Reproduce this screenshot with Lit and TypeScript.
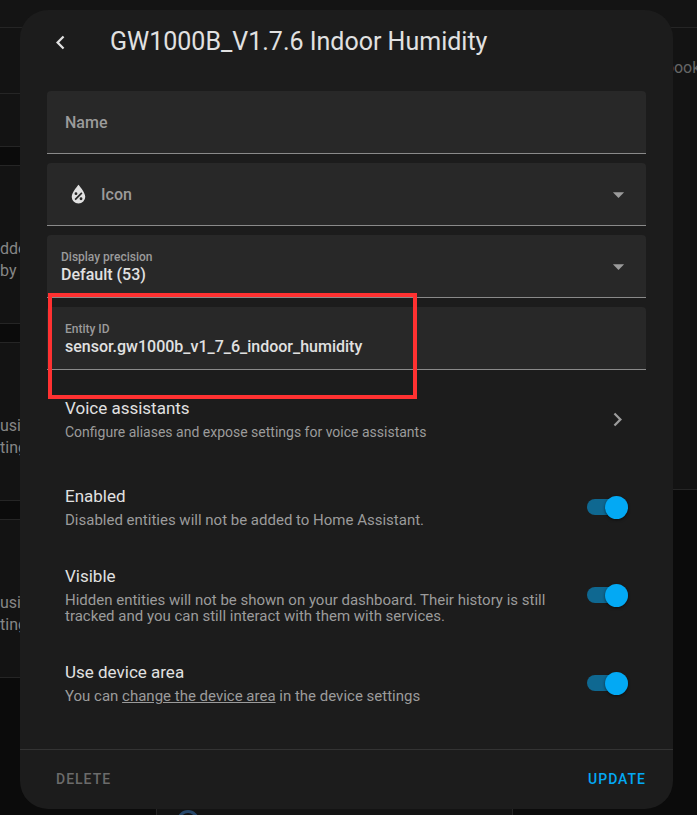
import { LitElement, html, css, nothing } from "lit";
import { customElement, property, state } from "lit/decorators.js";

const CHEVRON_LEFT = "M15.41,16.58L10.83,12L15.41,7.41L14,6L8,12L14,18L15.41,16.58Z";
const CHEVRON_RIGHT = "M8.59,16.58L13.17,12L8.59,7.41L10,6L16,12L10,18L8.59,16.58Z";
const MENU_DOWN = "M7,10L12,15L17,10H7Z";
const WATER_PERCENT =
  "M12,3.25C12,3.25 6,10 6,14C6,17.32 8.69,20 12,20A6,6 0 0,0 18,14C18,10 12,3.25 12,3.25M14.47,9.97L15.53,11.03L9.53,17.03L8.47,15.97M9.75,10A1.25,1.25 0 0,1 11,11.25A1.25,1.25 0 0,1 9.75,12.5A1.25,1.25 0 0,1 8.5,11.25A1.25,1.25 0 0,1 9.75,10M14.25,14.5A1.25,1.25 0 0,1 15.5,15.75A1.25,1.25 0 0,1 14.25,17A1.25,1.25 0 0,1 13,15.75A1.25,1.25 0 0,1 14.25,14.5Z";

const icon = (path: string, cls = "") =>
  html`<svg class="icon ${cls}" viewBox="0 0 24 24" aria-hidden="true"><path d=${path}></path></svg>`;

/* The settings page that shows dimly around the dialog. */
@customElement("page-backdrop")
export class PageBackdrop extends LitElement {
  static styles = css`
    :host {
      display: flex;
      flex-direction: column;
      overflow: hidden;
      background: #0b0b0b;
      color: #868686;
      font: 16px/22px Roboto, sans-serif;
    }
    .bar {
      flex: none;
      height: 27px;
      background: #141414;
      border-bottom: 1px solid #252525;
    }
    .columns {
      flex: 1;
      display: flex;
      justify-content: space-between;
    }
    .left {
      width: 40px;
      display: flex;
      flex-direction: column;
      gap: 18px;
    }
    .card {
      box-sizing: border-box;
      height: 159px;
      padding-top: 72px;
      background: #131313;
      border: solid #252525;
      border-width: 1px 0;
      white-space: nowrap;
      overflow: hidden;
    }
    .card.first {
      height: 119px;
      padding: 0;
      border-top: 0;
    }
    .tab {
      height: 65px;
      border-bottom: 1px solid #252525;
    }
    .right {
      box-sizing: border-box;
      width: 34px;
      height: 462px;
      padding: 29px 0 0 2px;
      background: #131313;
      border-bottom: 1px solid #252525;
      color: #666;
      white-space: nowrap;
      overflow: hidden;
    }
    .bottom {
      flex: none;
      display: grid;
      grid-template-columns: 156fr 357fr 184fr;
      height: 8px;
    }
    .tile {
      grid-column: 2;
      padding: 3px 0 0 20px;
      overflow: hidden;
      background: #131313;
      border: solid #252525;
      border-width: 0 1px;
    }
    .ring {
      box-sizing: border-box;
      width: 22px;
      height: 22px;
      border: 3px solid #27476a;
      border-radius: 50%;
    }
  `;

  render() {
    return html`
      <div class="bar"></div>
      <div class="columns">
        <div class="left">
          <div class="card first"><div class="tab"></div></div>
          <div class="card">dde<br />by d</div>
          <div class="card">usi<br />ting</div>
          <div class="card">usin<br />ting</div>
        </div>
        <div class="right">book</div>
      </div>
      <div class="bottom">
        <div class="tile"><div class="ring"></div></div>
      </div>
    `;
  }
}

@customElement("settings-row")
export class SettingsRow extends LitElement {
  @property() heading = "";
  @property() name = "";
  @property({ type: Boolean }) link = false;
  @state() private checked = true;

  static styles = css`
    :host {
      display: block;
    }
    .row {
      box-sizing: border-box;
      width: 100%;
      min-height: 88px;
      padding: 0 18px;
      display: flex;
      align-items: center;
      justify-content: space-between;
      gap: 24px;
      border: 0;
      background: none;
      color: #e1e1e1;
      font: 17px/20px Roboto, sans-serif;
      text-align: left;
    }
    .text {
      flex: 1;
      max-width: 490px;
      display: flex;
      flex-direction: column;
      gap: 6px;
    }
    .description {
      color: #9b9b9b;
      font-size: 15px;
      line-height: 16px;
    }
    .compact .description {
      font-size: 14px;
    }
    .icon {
      flex: none;
      width: 27px;
      height: 27px;
      margin-right: -3px;
      fill: #9b9b9b;
    }
    .toggle {
      appearance: none;
      flex: none;
      display: flex;
      align-items: center;
      justify-content: flex-end;
      width: 41px;
      height: 16px;
      margin: 0;
      border-radius: 8px;
      background: #0f6891;
    }
    .toggle::before {
      content: "";
      flex: none;
      width: 23px;
      height: 23px;
      border-radius: 50%;
      background: #03a9f4;
      box-shadow: 0 1px 3px #0008;
    }
    .toggle:not(:checked) {
      justify-content: flex-start;
      background: #555;
    }
    .toggle:not(:checked)::before {
      background: #bbb;
    }
  `;

  private onChange(e: Event) {
    this.checked = (e.target as HTMLInputElement).checked;
  }

  render() {
    if (this.link) {
      return html`<button class="row" type="button">
        <span class="text compact">
          <span>${this.heading}</span>
          <span class="description"><slot></slot></span>
        </span>
        ${icon(CHEVRON_RIGHT)}
      </button>`;
    }
    return html`<div class="row">
      <div class="text">
        <label for="toggle">${this.heading}</label>
        <span class="description" id="description"><slot></slot></span>
      </div>
      <input
        class="toggle"
        id="toggle"
        type="checkbox"
        role="switch"
        name=${this.name || nothing}
        aria-describedby="description"
        .checked=${this.checked}
        @change=${this.onChange}
      />
    </div>`;
  }
}

@customElement("app-root")
export class AppRoot extends LitElement {
  static styles = css`
    :host {
      display: grid;
      min-height: 100vh;
      font-family: Roboto, sans-serif;
      color: #e1e1e1;
    }
    page-backdrop,
    .dialog {
      grid-area: 1 / 1;
    }
    page-backdrop {
      min-width: 0;
    }
    .dialog {
      z-index: 1;
      align-self: start;
      display: flex;
      flex-direction: column;
      margin: 10px 24px 6px 20px;
      overflow: hidden;
      border-radius: 28px;
      background: #1c1c1c;
    }
    .header {
      display: flex;
      align-items: center;
      gap: 36px;
      height: 64px;
      padding: 0 27px;
    }
    .title {
      margin: 0;
      font-size: 25px;
      line-height: 32px;
      font-weight: 400;
      white-space: nowrap;
    }
    .back {
      display: flex;
      padding: 0;
      border: 0;
      background: none;
    }
    .icon {
      width: 27px;
      height: 27px;
      fill: #e1e1e1;
    }
    .content {
      padding: 17px 27px 22px;
    }
    .fields {
      display: grid;
      gap: 9px;
      margin-bottom: 5px;
    }
    .field {
      position: relative;
      display: grid;
      grid-template-columns: minmax(0, 1fr);
      align-items: center;
      height: 62px;
      border-bottom: 1px solid #8a8a8a;
      border-radius: 4px 4px 0 0;
      background: #282828;
    }
    .field > * {
      grid-area: 1 / 1;
    }
    .label {
      padding: 2px 18px 0;
      color: #9b9b9b;
      font-size: 16px;
      line-height: 20px;
      font-weight: 500;
      pointer-events: none;
      z-index: 1;
    }
    .floating {
      align-self: start;
      padding-top: 14px;
      font-size: 12px;
      line-height: 16px;
    }
    .control {
      appearance: none;
      box-sizing: border-box;
      width: 100%;
      height: 62px;
      margin: 0;
      padding: 17px 18px 0;
      border: 0;
      outline: 0;
      background: none;
      color: #e1e1e1;
      font: 500 16px/20px Roboto, sans-serif;
    }
    .with-icon .label,
    .with-icon .control {
      padding-left: 54px;
    }
    .select .label,
    .select .control {
      padding-left: 14px;
    }
    .leading {
      margin-left: 18px;
      pointer-events: none;
    }
    .arrow {
      justify-self: end;
      margin-right: 14px;
      fill: #9b9b9b;
      pointer-events: none;
    }
    .highlight {
      position: absolute;
      z-index: 2;
      top: -14px;
      left: 1px;
      box-sizing: border-box;
      width: 369px;
      height: 106px;
      border: 4px solid #ff3131;
      pointer-events: none;
    }
    .link {
      color: inherit;
    }
    .footer {
      display: flex;
      align-items: center;
      justify-content: space-between;
      height: 57px;
      padding: 0 27px 2px 36px;
      border-top: 1px solid #333;
    }
    .action {
      padding: 0;
      border: 0;
      background: none;
      color: #6b6b6b;
      font: 500 14px/20px Roboto, sans-serif;
      letter-spacing: 1px;
      text-transform: uppercase;
    }
    .primary {
      color: #03a9f4;
    }
  `;

  render() {
    return html`
      <page-backdrop aria-hidden="true"></page-backdrop>
      <main class="dialog" role="dialog" aria-labelledby="title">
        <header class="header">
          <button class="back" type="button" aria-label="Back">${icon(CHEVRON_LEFT)}</button>
          <h1 class="title" id="title">GW1000B_V1.7.6 Indoor Humidity</h1>
        </header>
        <div class="content">
          <div class="fields">
            <div class="field">
              <label class="label" for="name">Name</label>
              <input class="control" id="name" type="text" />
            </div>
            <div class="field with-icon">
              ${icon(WATER_PERCENT, "leading")}
              <label class="label" for="icon">Icon</label>
              <input class="control" id="icon" type="text" role="combobox" aria-expanded="false" />
              ${icon(MENU_DOWN, "arrow")}
            </div>
            <div class="field select">
              <label class="label floating" for="precision">Display precision</label>
              <select class="control" id="precision">
                <option>Default (53)</option>
              </select>
              ${icon(MENU_DOWN, "arrow")}
            </div>
            <div class="field">
              <label class="label floating" for="entity">Entity ID</label>
              <input
                class="control"
                id="entity"
                type="text"
                spellcheck="false"
                value="sensor.gw1000b_v1_7_6_indoor_humidity"
              />
              <span class="highlight"></span>
            </div>
          </div>
          <settings-row link heading="Voice assistants"
            >Configure aliases and expose settings for voice assistants</settings-row
          >
          <settings-row name="enabled" heading="Enabled"
            >Disabled entities will not be added to Home Assistant.</settings-row
          >
          <settings-row name="visible" heading="Visible"
            >Hidden entities will not be shown on your dashboard. Their history is still tracked and
            you can still interact with them with services.</settings-row
          >
          <settings-row name="device-area" heading="Use device area"
            >You can <a class="link" href="#device">change the device area</a> in the device
            settings</settings-row
          >
        </div>
        <footer class="footer">
          <button class="action" type="button">Delete</button>
          <button class="action primary" type="button">Update</button>
        </footer>
      </main>
    `;
  }
}
